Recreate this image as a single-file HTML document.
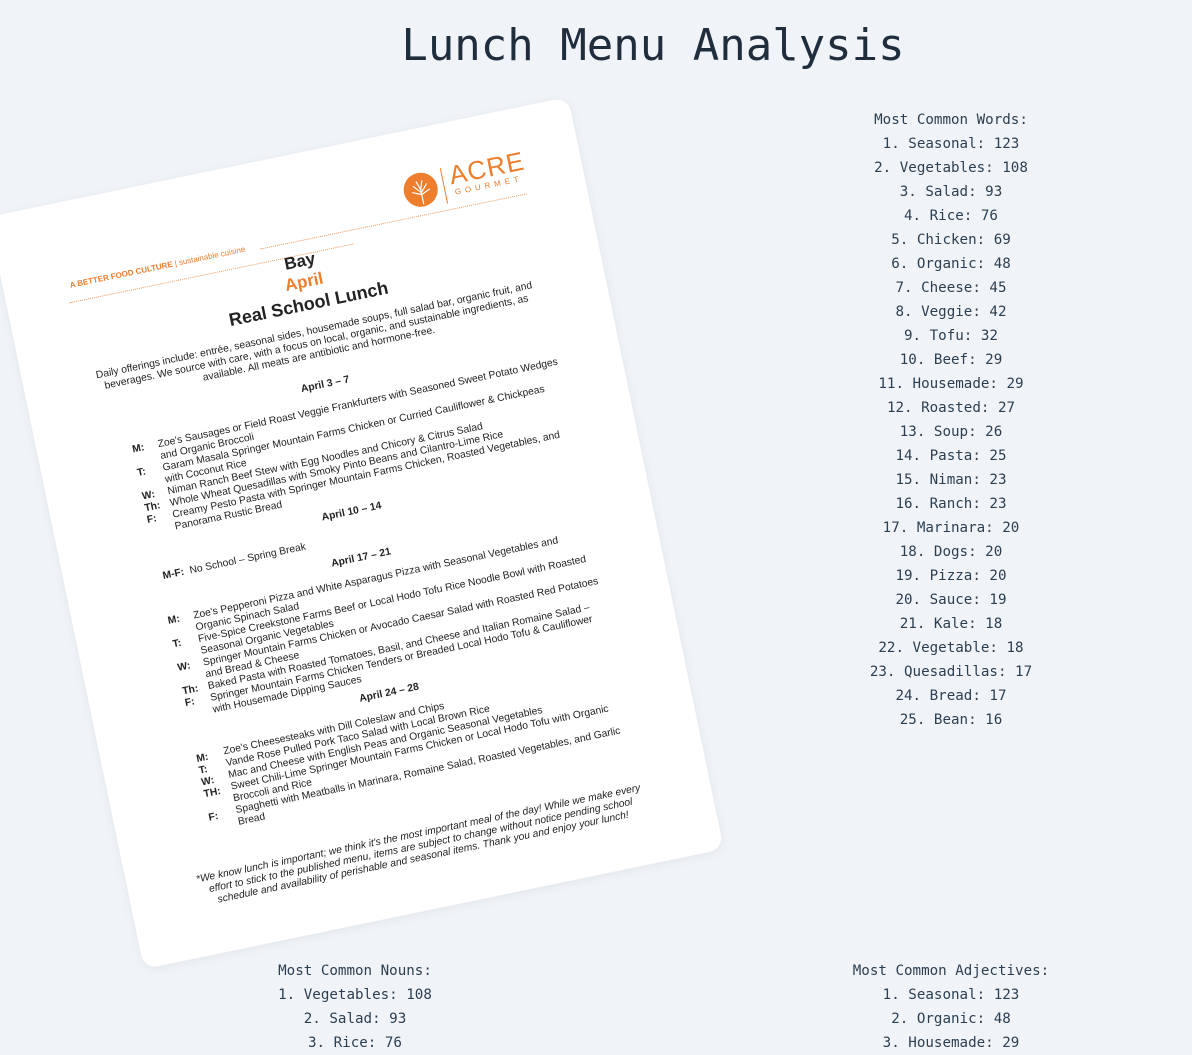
<!DOCTYPE html>
<html><head><meta charset="utf-8"><style>
body{margin:0;width:1192px;height:1053px;background:#f0f4f8;overflow:hidden;position:relative;font-family:"DejaVu Sans Mono","Liberation Mono",monospace;color:#2c3e50}
.title{position:absolute;top:16px;left:0;width:1306px;text-align:center;font-size:44px;line-height:60px;color:#1f2d3d}
.list{position:absolute;text-align:center;font-size:14.2px;line-height:24px;color:#2c3e50;white-space:pre}
.doc{position:absolute;left:60px;top:149px;width:592px;height:768px;background:#fff;border-radius:14px;transform:rotate(-11.7deg);box-shadow:0 2px 10px rgba(0,0,0,0.06);font-family:"Liberation Sans",sans-serif;color:#222;font-size:10.3px;line-height:12px}
.doc div{position:absolute;white-space:nowrap}
.c{left:0;width:592px;text-align:center}
.b{font-weight:bold}
.lab{left:94px;font-weight:bold}
.it{left:120px}
</style></head><body>
<div class="title">Lunch Menu Analysis</div>
<div class="list" style="left:851px;width:200px;top:108px">Most Common Words:
1. Seasonal: 123
2. Vegetables: 108
3. Salad: 93
4. Rice: 76
5. Chicken: 69
6. Organic: 48
7. Cheese: 45
8. Veggie: 42
9. Tofu: 32
10. Beef: 29
11. Housemade: 29
12. Roasted: 27
13. Soup: 26
14. Pasta: 25
15. Niman: 23
16. Ranch: 23
17. Marinara: 20
18. Dogs: 20
19. Pizza: 20
20. Sauce: 19
21. Kale: 18
22. Vegetable: 18
23. Quesadillas: 17
24. Bread: 17
25. Bean: 16</div>
<div class="list" style="left:235px;width:240px;top:959px">Most Common Nouns:
1. Vegetables: 108
2. Salad: 93
3. Rice: 76</div>
<div class="list" style="left:831px;width:240px;top:959px">Most Common Adjectives:
1. Seasonal: 123
2. Organic: 48
3. Housemade: 29</div>

<div class="doc">
  <div style="left:412px;top:44px;width:34px;height:34px;border-radius:50%;background:#ee7d2c"></div>
  <svg style="position:absolute;left:412px;top:44px" width="34" height="34" viewBox="0 0 34 34"><g stroke="#fff" stroke-width="1.2" fill="none"><path d="M17 32V16M17 20L10 12M17 20L24 12M17 17L14 8M17 17L20 8M17 22L8 18M17 22L26 18"/></g></svg>
  <div style="left:452px;top:44px;width:1px;height:36px;background:#ee7d2c"></div>
  <div style="left:460px;top:40px;font-size:26px;line-height:26px;color:#ee7d2c;letter-spacing:1px">ACRE</div>
  <div style="left:462px;top:66px;font-size:8px;line-height:10px;color:#ee7d2c;letter-spacing:4px">GOURMET</div>
  <div style="left:66px;top:78px;font-size:8px;color:#ee7d2c"><b>A BETTER FOOD CULTURE</b> | sustainable cuisine</div>
  <div style="left:260px;top:86px;width:272px;border-top:1px dotted #ee9a5c"></div>
  <div style="left:62px;top:100px;width:290px;border-top:1px dotted #ee9a5c"></div>
  <div class="c b" style="top:98px;font-size:17px;line-height:18px">Bay</div>
  <div class="c b" style="top:119px;font-size:17px;line-height:18px;color:#ee7d2c">April</div>
  <div class="c b" style="top:140px;font-size:18px;line-height:20px">Real School Lunch</div>
  <div class="c" style="top:172px">Daily offerings include: entrée, seasonal sides, housemade soups, full salad bar, organic fruit, and<br>beverages. We source with care, with a focus on local, organic, and sustainable ingredients, as<br>available. All meats are antibiotic and hormone-free.</div>
  <div class="c b" style="top:227px">April 3 – 7</div>
  <div class="lab" style="top:252px">M:</div><div class="lab" style="top:276px">T:</div><div class="lab" style="top:300px">W:</div><div class="lab" style="top:312px">Th:</div><div class="lab" style="top:324px">F:</div>
  <div class="it" style="top:252px">Zoe's Sausages or Field Roast Veggie Frankfurters with Seasoned Sweet Potato Wedges<br>and Organic Broccoli<br>Garam Masala Springer Mountain Farms Chicken or Curried Cauliflower &amp; Chickpeas<br>with Coconut Rice<br>Niman Ranch Beef Stew with Egg Noodles and Chicory &amp; Citrus Salad<br>Whole Wheat Quesadillas with Smoky Pinto Beans and Cilantro-Lime Rice<br>Creamy Pesto Pasta with Springer Mountain Farms Chicken, Roasted Vegetables, and<br>Panorama Rustic Bread</div>
  <div class="c b" style="top:357px">April 10 – 14</div>
  <div class="lab" style="top:382px;left:98px">M-F: <span style="font-weight:normal">&nbsp;No School – Spring Break</span></div>
  <div class="c b" style="top:404px">April 17 – 21</div>
  <div class="lab" style="top:427px">M:</div><div class="lab" style="top:451px">T:</div><div class="lab" style="top:475px">W:</div><div class="lab" style="top:499px">Th:</div><div class="lab" style="top:511px">F:</div>
  <div class="it" style="top:427px">Zoe's Pepperoni Pizza and White Asparagus Pizza with Seasonal Vegetables and<br>Organic Spinach Salad<br>Five-Spice Creekstone Farms Beef or Local Hodo Tofu Rice Noodle Bowl with Roasted<br>Seasonal Organic Vegetables<br>Springer Mountain Farms Chicken or Avocado Caesar Salad with Roasted Red Potatoes<br>and Bread &amp; Cheese<br>Baked Pasta with Roasted Tomatoes, Basil, and Cheese and Italian Romaine Salad –<br>Springer Mountain Farms Chicken Tenders or Breaded Local Hodo Tofu &amp; Cauliflower<br>with Housemade Dipping Sauces</div>
  <div class="c b" style="top:542px">April 24 – 28</div>
  <div class="lab" style="top:568px">M:</div><div class="lab" style="top:580px">T:</div><div class="lab" style="top:592px">W:</div><div class="lab" style="top:604px">TH:</div><div class="lab" style="top:628px">F:</div>
  <div class="it" style="top:566px;left:122px">Zoe's Cheesesteaks with Dill Coleslaw and Chips<br>Vande Rose Pulled Pork Taco Salad with Local Brown Rice<br>Mac and Cheese with English Peas and Organic Seasonal Vegetables<br>Sweet Chili-Lime Springer Mountain Farms Chicken or Local Hodo Tofu with Organic<br>Broccoli and Rice<br>Spaghetti with Meatballs in Marinara, Romaine Salad, Roasted Vegetables, and Garlic<br>Bread</div>
  <div class="c" style="top:686px;font-style:italic">*We know lunch is important; we think it's the most important meal of the day! While we make every<br>effort to stick to the published menu, items are subject to change without notice pending school<br>schedule and availability of perishable and seasonal items. Thank you and enjoy your lunch!</div>
</div>
</body></html>
